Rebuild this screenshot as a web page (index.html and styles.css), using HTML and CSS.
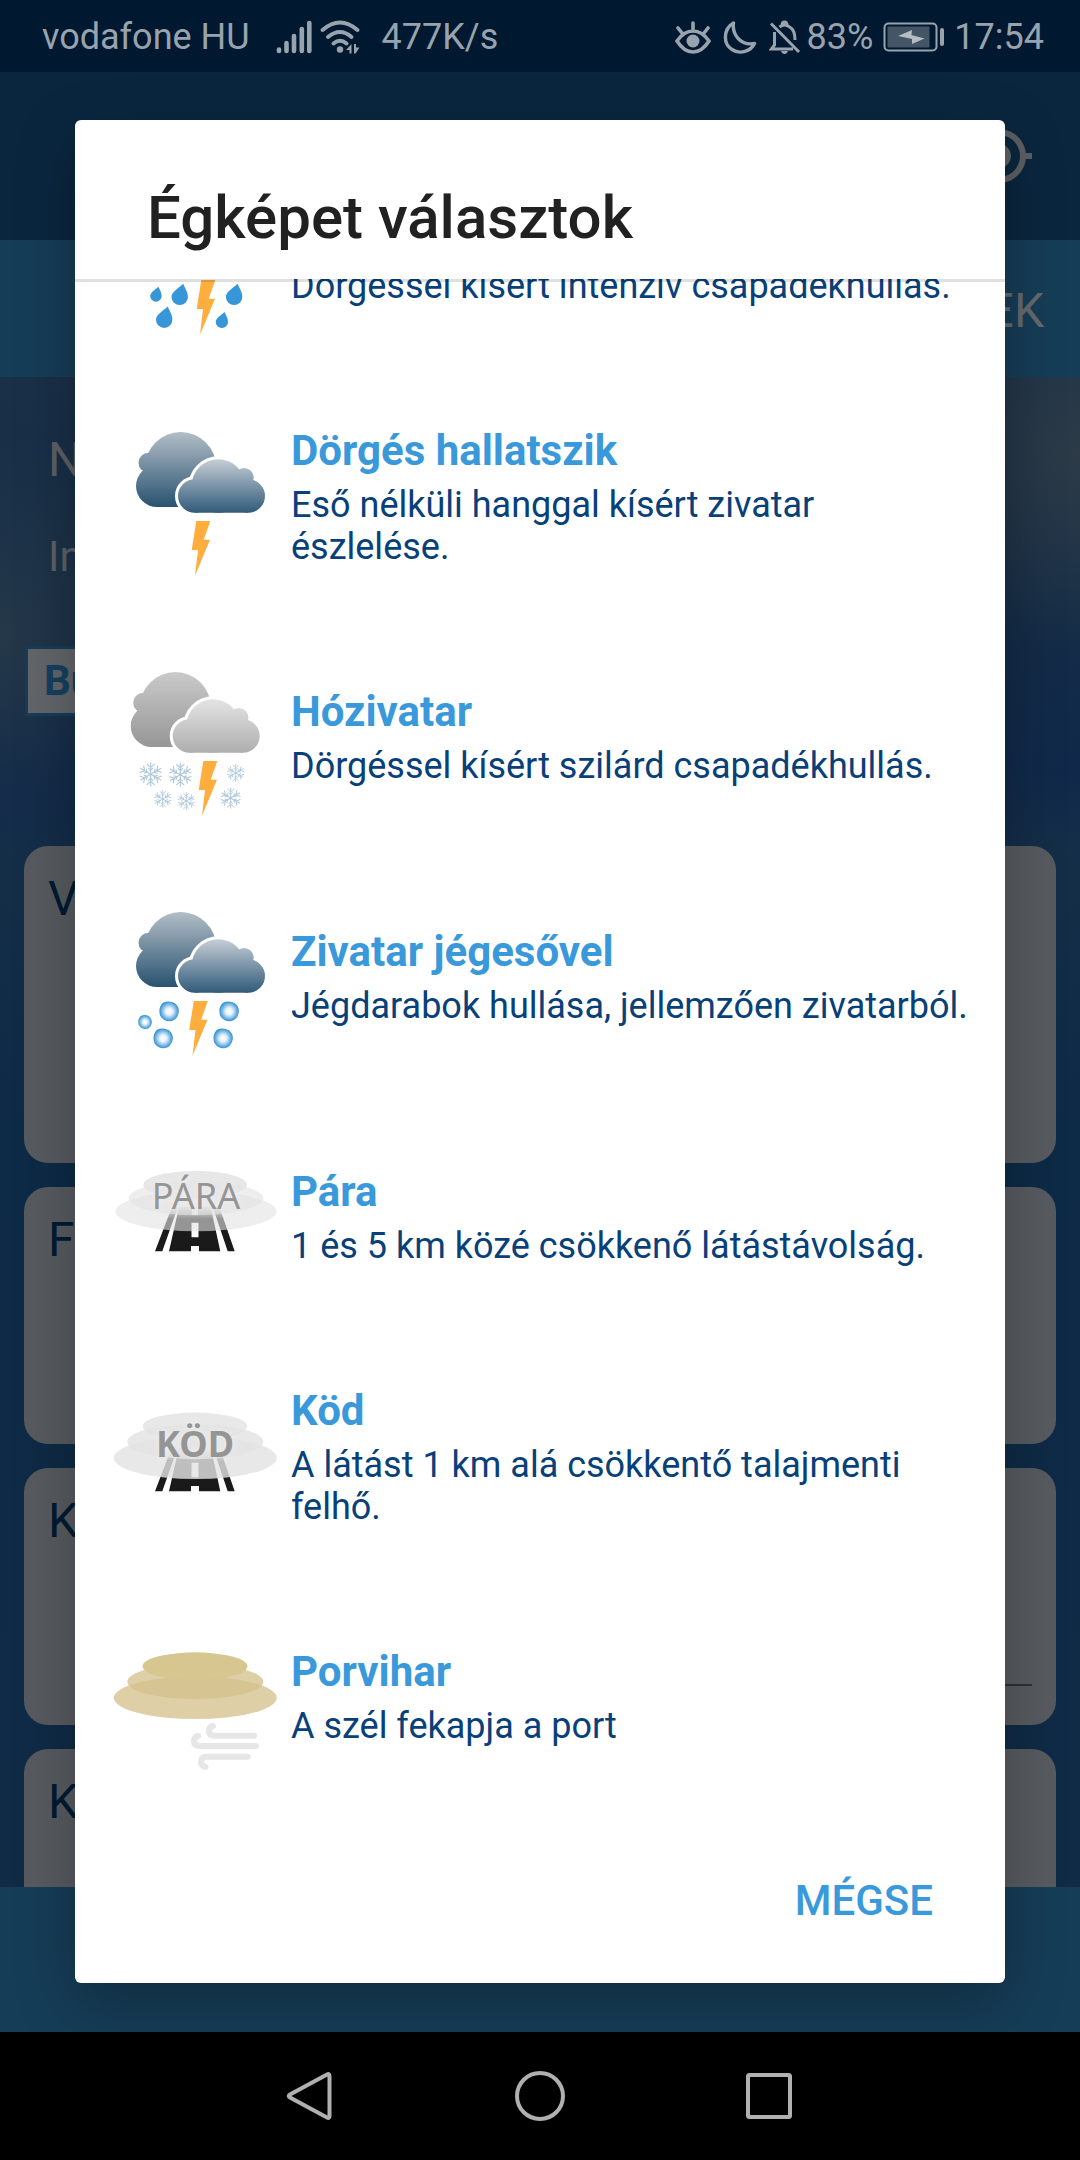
FILE: index.html
```html
<!DOCTYPE html>
<html lang="hu">
<head>
<meta charset="utf-8">
<meta name="viewport" content="width=device-width">
<title>Égképet választok</title>
<link rel="stylesheet" href="styles.css">
</head>
<body>
<svg class="defs" aria-hidden="true">
  <defs>
    <linearGradient id="storm-back" gradientUnits="userSpaceOnUse" x1="0" y1="19" x2="0" y2="94"><stop offset="0" stop-color="#b3bec8"/><stop offset="1" stop-color="#28526f"/></linearGradient>
    <linearGradient id="storm-front" gradientUnits="userSpaceOnUse" x1="0" y1="46" x2="0" y2="100"><stop offset="0" stop-color="#c6ced6"/><stop offset="1" stop-color="#305a79"/></linearGradient>
    <linearGradient id="snow-back" gradientUnits="userSpaceOnUse" x1="0" y1="19" x2="0" y2="94"><stop offset="0" stop-color="#cacaca"/><stop offset="1" stop-color="#969696"/></linearGradient>
    <linearGradient id="snow-front" gradientUnits="userSpaceOnUse" x1="0" y1="46" x2="0" y2="100"><stop offset="0" stop-color="#e4e4e4"/><stop offset="1" stop-color="#aeaeae"/></linearGradient>
    <linearGradient id="road-fade" gradientUnits="userSpaceOnUse" x1="0" y1="72" x2="0" y2="86"><stop offset="0" stop-color="#fff" stop-opacity=".95"/><stop offset="1" stop-color="#fff" stop-opacity="0"/></linearGradient>
    <radialGradient id="hail-fill"><stop offset="0" stop-color="#fff"/><stop offset=".35" stop-color="#e6f2fb"/><stop offset="1" stop-color="#3090d6"/></radialGradient>
    <filter id="glow" x="-20%" y="-40%" width="140%" height="180%"><feGaussianBlur stdDeviation="3"/></filter>
    <g id="cloud-back"><circle cx="69.700" cy="54.600" r="35.600"/><circle cx="37.500" cy="49.700" r="10"/><circle cx="46" cy="73" r="21"/><path d="M46 60H96V94H46z"/></g>
    <g id="cloud-front"><circle cx="107.300" cy="73" r="26.700"/><circle cx="133" cy="64.700" r="9.700"/><circle cx="83.700" cy="83" r="16.700"/><circle cx="137.300" cy="83" r="16.700"/><path d="M83.700 75H137.300V99.700H83.700z"/></g>
    <path id="bolt" d="M85.300 108H99.300L92.700 126.700H99L84 162.700L87 137H80.700z" fill="#ffad3d"/>
    <path id="drop" d="M0 0C-4 4-11.700 8-11.700 13.200a8.200 8.200 0 0 0 16.400 0C4.700 8 1.500 4 0 0z" fill="#3796d8"/>
    <path id="flake-arm" d="M0 0V-12M-4-10.500L0-7L4-10.500M-2.500-6.500L0-4L2.500-6.500"/>
    <g id="flake" fill="none" stroke="#adc6da" stroke-width="1.100"><use href="#flake-arm"/><use href="#flake-arm" transform="rotate(60)"/><use href="#flake-arm" transform="rotate(120)"/><use href="#flake-arm" transform="rotate(180)"/><use href="#flake-arm" transform="rotate(240)"/><use href="#flake-arm" transform="rotate(300)"/></g>
    <path id="hail" d="M-6-8.500Q0-11.500 6-8Q11-3.500 9.500 2Q8 9 1 10Q-6 10-9 4Q-11-4-6-8.500z" fill="url(#hail-fill)"/>
    <g id="road"><path fill="#1a1a1a" fill-rule="evenodd" d="M44 118.300H51.300L67 73.700H61zM116.700 118.300H123.700L108.300 73.700H101.700zM58 118.300H109.300L99.700 74H68zM80.500 89.700V104.300H87.500V89.700zM80 113V118.300H88V113zM81 74V82H87V74z"/><path fill="url(#road-fade)" d="M55 72H115V86H55z"/></g>
    <g id="haze"><ellipse cx="84.300" cy="84.800" rx="81.500" ry="21.300"/><ellipse cx="84.300" cy="68.700" rx="68" ry="17.500"/><ellipse cx="84" cy="53.300" rx="52.300" ry="13.700"/></g>
  </defs>
</svg>

<div class="screen">
  <header class="status">
    <span>vodafone HU</span>
    <svg class="status__signal" viewBox="0 0 36 34" width="36" height="34"><g stroke="currentColor" stroke-width="4.600" stroke-linecap="round"><path d="M3 29.500V31M10.500 23V31M18 16V31M25.800 9V31M33.300 3V31"/></g></svg>
    <svg viewBox="0 0 40 34" width="40" height="34"><g fill="none" stroke="currentColor" stroke-width="3.800" stroke-linecap="round"><path d="M2.500 10Q20-5 37.500 10M8 17Q20 7 31.500 17M13.500 23.500Q20 18 26.500 23.500"/></g><circle cx="20" cy="29.500" r="3.200" fill="currentColor"/><path fill="currentColor" d="M31.500 24v9.500h-2V30h-3.500zM34 24v9.500h1.500l4-6H36V24z"/></svg>
    <span class="status__speed">477K/s</span>
    <span class="status__right">
      <svg viewBox="0 0 36 34" width="36" height="34"><g fill="none" stroke="currentColor" stroke-width="3.600" stroke-linecap="round"><path d="M2 21Q9 11 18 11T34 21Q27 32 18 32T2 21zM18 3V9M3 8L7 13M33 8L29 13"/></g><circle cx="18" cy="21" r="6.500" fill="currentColor"/></svg>
      <svg class="status__moon" viewBox="0 0 34 34" width="34" height="34"><path fill="none" stroke="currentColor" stroke-width="3.400" stroke-linejoin="round" d="M10.500 3C0 9 0 24 9 29.500C17 35 28 31 31.500 23.500C17 26 9 14 10.500 3z"/></svg>
      <svg class="status__bell" viewBox="0 0 32 34" width="32" height="34"><g fill="none" stroke="currentColor" stroke-width="3"><path d="M2 3.500L30 32M5.500 12V25L2.500 29H24M10.500 7Q16 2.500 22 8Q26 11 26 20M13 5.500Q13 2 15.500 2T18 5.500"/></g><path fill="currentColor" d="M12 31h7q-1 3-3.500 3T12 31z"/></svg>
      <span>83%</span>
      <svg class="status__battery" viewBox="0 0 62 30" width="62" height="30"><rect x="1.500" y="1.500" width="52" height="27" rx="4" fill="none" stroke="currentColor" stroke-width="2"/><rect x="4.500" y="4.500" width="42" height="21" rx="1" fill="#445566"/><rect x="57" y="6" width="4" height="18" rx="2" fill="currentColor"/><path fill="#b5bcc4" d="M15 14L29 8L28.500 13L41.500 16.500L29 22V17z"/></svg>
      <span>17:54</span>
    </span>
  </header>

  <div class="appbar">
    <svg viewBox="0 0 24 24" width="72" height="72"><path fill="currentColor" d="M12 8c-2.210 0-4 1.790-4 4s1.790 4 4 4 4-1.790 4-4-1.790-4-4-4zm8.940 3c-.46-4.170-3.770-7.480-7.940-7.940V1h-2v2.060C6.830 3.520 3.520 6.830 3.060 11H1v2h2.060c.46 4.170 3.770 7.480 7.940 7.940V23h2v-2.060c4.170-.46 7.480-3.770 7.940-7.940H23v-2h-2.060zM12 19c-3.870 0-7-3.130-7-7s3.130-7 7-7 7 3.130 7 7-3.130 7-7 7z"/></svg>
  </div>
  <div class="tabs">EK</div>

  <main class="page">
    <div class="intro">
      <p class="intro__title">N</p>
      <p class="intro__note">In</p>
      <p class="intro__badge">Bu</p>
    </div>
    <section class="card card--tall">V</section>
    <section class="card">F</section>
    <section class="card">K<hr class="card__line"></section>
    <section class="card">K</section>
  </main>
  <div class="bottombar"></div>

  <nav class="navbar">
    <button class="navbar__button" aria-label="Vissza"><svg viewBox="0 0 60 60" width="60" height="60"><path d="M47 8.500Q49.500 7 49.500 10V50Q49.500 53 47 51.500L10 31.500Q7.500 30 10 28.500z"/></svg></button>
    <button class="navbar__button" aria-label="Kezdőképernyő"><svg viewBox="0 0 60 60" width="60" height="60"><circle cx="30" cy="30" r="23"/></svg></button>
    <button class="navbar__button" aria-label="Áttekintés"><svg viewBox="0 0 60 60" width="60" height="60"><rect x="8" y="9" width="42" height="42" rx="1.500"/></svg></button>
  </nav>

  <div class="overlay">
    <div class="dialog" role="dialog" aria-labelledby="dialog-title">
      <h1 class="dialog__title" id="dialog-title">Égképet választok</h1>
      <div class="dialog__scroll">
        <ul class="list">
          <li class="item">
            <svg class="item__icon" viewBox="0 0 168 168"><use href="#drop" transform="translate(47.400 113.700) scale(.7)"/><use href="#drop" x="72.200" y="110.700"/><use href="#drop" x="56.700" y="133.500"/><use href="#drop" x="126.600" y="110.700"/><use href="#drop" transform="translate(113.500 139) scale(.75)"/><use href="#bolt" x="5" y="-1"/></svg>
            <div class="item__text item__text--continued"><p class="item__desc">Dörgéssel kísért intenzív csapadékhullás.</p></div>
          </li>
          <li class="item">
            <svg class="item__icon" viewBox="0 0 168 168"><use href="#cloud-back" fill="url(#storm-back)"/><use href="#cloud-front" fill="#fff" stroke="#fff" stroke-width="6"/><use href="#cloud-front" fill="url(#storm-front)"/><use href="#bolt"/></svg>
            <div class="item__text"><h2 class="item__name">Dörgés hallatszik</h2><p class="item__desc">Eső nélküli hanggal kísért zivatar észlelése.</p></div>
          </li>
          <li class="item">
            <svg class="item__icon" viewBox="0 0 168 168"><g transform="translate(-5.300 0)"><use href="#cloud-back" fill="url(#snow-back)"/><use href="#cloud-front" fill="#fff" stroke="#fff" stroke-width="6"/><use href="#cloud-front" fill="url(#snow-front)"/></g><use href="#flake" x="39.700" y="121.300"/><use href="#flake" x="69.300" y="121.700"/><use href="#flake" transform="translate(124.700 120) scale(.75)"/><use href="#flake" transform="translate(51.700 146) scale(.75)"/><use href="#flake" transform="translate(75.300 148) scale(.75)"/><use href="#flake" transform="translate(119.700 145) scale(.88)"/><use href="#bolt" x="7"/></svg>
            <div class="item__text"><h2 class="item__name">Hózivatar</h2><p class="item__desc">Dörgéssel kísért szilárd csapadékhullás.</p></div>
          </li>
          <li class="item">
            <svg class="item__icon" viewBox="0 0 168 168"><use href="#cloud-back" fill="url(#storm-back)"/><use href="#cloud-front" fill="#fff" stroke="#fff" stroke-width="6"/><use href="#cloud-front" fill="url(#storm-front)"/><use href="#hail" x="58" y="118.300"/><use href="#hail" transform="translate(34 129) scale(.7)"/><use href="#hail" x="118" y="118.300"/><use href="#hail" x="52" y="145.300"/><use href="#hail" x="112" y="145.300"/><use href="#bolt" x="-2.500"/></svg>
            <div class="item__text"><h2 class="item__name">Zivatar jégesővel</h2><p class="item__desc">Jégdarabok hullása, jellemzően zivatarból.</p></div>
          </li>
          <li class="item">
            <svg class="item__icon" viewBox="0 0 168 168"><use href="#road"/><g fill="#e3e3e3" fill-opacity=".61"><ellipse cx="85" cy="78.300" rx="80.500" ry="20"/><ellipse cx="85" cy="65.300" rx="67.300" ry="17"/><ellipse cx="84.200" cy="51.700" rx="51.800" ry="13.700" fill-opacity=".85"/></g><text class="fog fog--glow" x="85" y="76" filter="url(#glow)">PÁRA</text><text class="fog" x="85" y="76">PÁRA</text></svg>
            <div class="item__text"><h2 class="item__name">Pára</h2><p class="item__desc">1 és 5 km közé csökkenő látástávolság.</p></div>
          </li>
          <li class="item">
            <svg class="item__icon" viewBox="0 0 168 168"><use href="#road"/><use href="#haze" fill="#e3e3e3" fill-opacity=".82"/><text class="fog fog--bold fog--glow" x="84" y="84" filter="url(#glow)">KÖD</text><text class="fog fog--bold" x="84" y="84">KÖD</text></svg>
            <div class="item__text"><h2 class="item__name">Köd</h2><p class="item__desc">A látást 1 km alá csökkentő talajmenti felhő.</p></div>
          </li>
          <li class="item">
            <svg class="item__icon" viewBox="0 0 168 168"><use href="#haze" fill="#d4c08b" fill-opacity=".76"/><ellipse cx="84" cy="53.300" rx="52.300" ry="13.700" fill="#d8c690"/><g fill="none" stroke="#e6e6e6" stroke-width="6" stroke-linecap="round"><path d="M143 122.700H103Q98 122.700 98 117.700Q98 113.500 102 113M145 133H88.500Q83 133 83 128Q83 124 87 123M136.700 143.700H95Q90 143.700 90 149Q90 153 94.500 154"/></g></svg>
            <div class="item__text"><h2 class="item__name">Porvihar</h2><p class="item__desc">A szél fekapja a port</p></div>
          </li>
        </ul>
      </div>
      <div class="dialog__actions"><button class="dialog__cancel">MÉGSE</button></div>
    </div>
  </div>
</div>
</body>
</html>
```
FILE: styles.css
```css
* { box-sizing: border-box; margin: 0; padding: 0; }
body { font-family: Roboto, "Noto Sans", sans-serif; background: #000; }
svg { display: block; flex: none; }
button { border: 0; background: none; font: inherit; }
.defs { position: absolute; width: 0; height: 0; }

.screen { position: relative; display: flex; flex-direction: column; height: 100vh; overflow: hidden; }

.status { display: flex; align-items: center; height: 72px; padding: 2px 36px 0 42px; background: #001930; color: #98a3ae; font-size: 36px; line-height: 42px; }
.status__signal { margin: 0 8px 0 26px; }
.status__speed { margin-left: 22px; }
.status__right { display: flex; align-items: center; margin-left: auto; }
.status__moon { margin-left: 12px; }
.status__bell { margin: 0 6px 0 12px; }
.status__battery { margin: 0 9px 0 10px; }

.appbar { display: flex; justify-content: flex-end; height: 168px; padding: 48px 45px; background: #0a263e; color: #5c5f63; }
.tabs { height: 137px; padding: 2px 36px 0; background: #163d57; color: #65696d; font-size: 48px; line-height: 137px; text-align: right; }

.page {
  flex: 1;
  min-height: 0;
  display: flex;
  flex-direction: column;
  gap: 24px;
  padding: 0 24px;
  overflow: hidden;
  background:
    radial-gradient(ellipse 180px 200px at 100% 5%, #2d3b47, transparent),
    radial-gradient(ellipse 160px 200px at 0 17%, #253849, transparent),
    linear-gradient(#1a3048, #142c47 16%, #10294a 26%, #152e48 32%, #0d2a46 50%, #102b46);
}
.intro { flex: none; height: 445px; padding: 55px 24px 0 24px; color: #5d6165; }
.intro__title { font-size: 48px; line-height: 56px; }
.intro__note { margin-top: 44px; font-size: 42px; line-height: 50px; }
.intro__badge { width: 200px; margin: 64px 0 0 -23px; padding: 0 16px; border: 3px solid #163d57; background: #62666a; color: #15405f; font-size: 42px; font-weight: 700; line-height: 64px; }
.card { flex: none; height: 257px; padding: 25px 24px 0; border-radius: 24px; background: #575b5f; color: #001a33; font-size: 48px; line-height: 56px; }
.card--tall { height: 317px; }
.card__line { width: 50%; margin: 135px 0 0 auto; border: 0; border-top: 2px solid #2b3238; }
.bottombar { flex: none; height: 145px; background: #163d57; }

.navbar { flex: none; display: flex; justify-content: center; align-items: center; gap: 170px; height: 128px; background: #000; }
.navbar__button { fill: none; stroke: #b0b0b0; stroke-width: 4px; }

.overlay { position: absolute; inset: 0; display: flex; padding: 120px 75px 177px; }
.dialog { flex: 1; min-width: 0; display: flex; flex-direction: column; border-radius: 6px; background: #fff; box-shadow: 0 20px 60px rgba(0, 0, 0, .28); overflow: hidden; }
.dialog__title { position: relative; flex: none; height: 162px; margin-bottom: -3px; padding: 63px 72px 0; border-bottom: 3px solid rgba(0, 0, 0, .12); color: #212121; font-size: 60px; font-weight: 500; line-height: 70px; }
.dialog__scroll { flex: 1; min-height: 0; display: flex; flex-direction: column-reverse; overflow-y: auto; scrollbar-width: none; }
.list { list-style: none; }
.item { display: flex; align-items: center; gap: 12px; height: 240px; padding: 0 24px 0 36px; }
.item__icon { width: 168px; height: 168px; }
.item__text { flex: 1; min-width: 0; }
.item__text--continued { padding-top: 58px; }
.item__name { margin-bottom: 8px; color: #3a99da; font-size: 42px; font-weight: 700; line-height: 50px; }
.item__desc { color: #08407a; font-size: 36px; line-height: 42px; }
.fog { fill: #959595; font-family: "Noto Sans", sans-serif; font-size: 36px; text-anchor: middle; }
.fog--bold { font-weight: 700; }
.fog--glow { fill: #fff; opacity: .4; }
.dialog__actions { flex: none; display: flex; justify-content: flex-end; height: 166px; padding: 47px 48px 0; }
.dialog__cancel { height: 72px; padding: 0 24px; color: #3a99da; font-size: 42px; font-weight: 500; }
```
